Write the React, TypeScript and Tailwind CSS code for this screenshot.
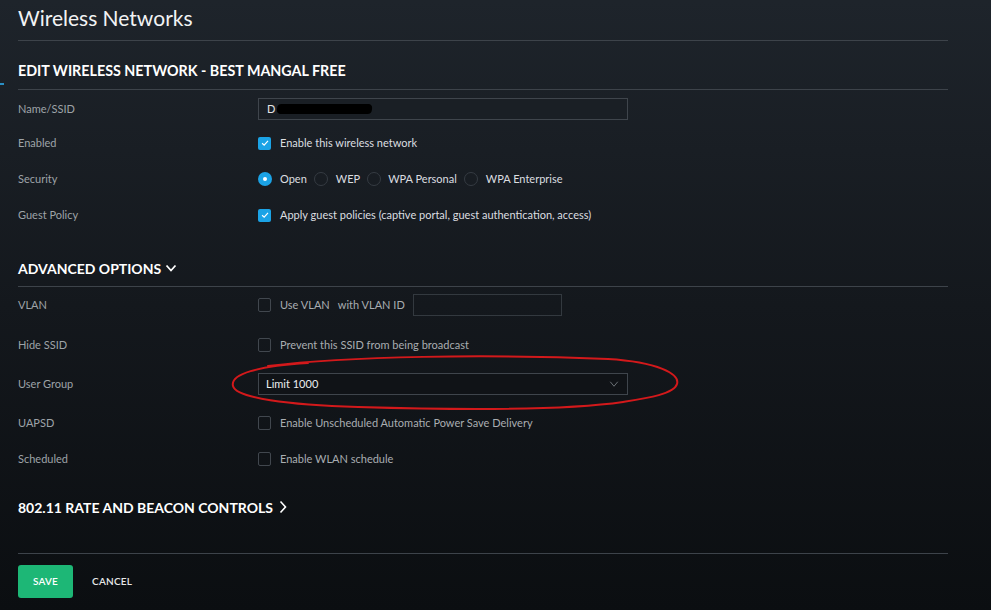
import React from 'react'

const Check = ({ checked }: { checked?: boolean }) =>
  checked ? (
    <span className="flex h-[13px] w-[13px] items-center justify-center rounded-[2px] bg-[#1ba3e6]">
      <svg viewBox="0 0 12 12" className="h-[10px] w-[10px]">
        <polyline points="2.5,6.3 5,8.6 9.6,3.4" fill="none" stroke="#fff" strokeWidth="1.4" />
      </svg>
    </span>
  ) : (
    <span className="h-[14px] w-[13px] rounded-[2px] border border-[#41474e]" />
  )

const Radio = ({ checked }: { checked?: boolean }) =>
  checked ? (
    <span className="flex h-[14px] w-[14px] items-center justify-center rounded-full bg-[#1ba3e6]">
      <span className="h-[4px] w-[4px] rounded-full bg-white" />
    </span>
  ) : (
    <span className="h-[14px] w-[14px] rounded-full border border-[#353b42]" />
  )

const Row = ({ label, h, children }: { label: string; h: string; children: React.ReactNode }) => (
  <div className={`flex items-center ${h}`}>
    <div className="w-[240px] text-[11px] text-[#9ea3a8]">{label}</div>
    <div className="flex items-center text-[11px] text-[#dcdee0]">{children}</div>
  </div>
)

export default function App() {
  return (
    <div
      className="relative h-[610px] w-[991px] overflow-hidden bg-gradient-to-b from-[#1e242b] via-[#14181d] to-[#0b0e11] pl-[18px]"
      style={{ fontFamily: 'Lato, "Open Sans", sans-serif' }}
    >
      <span className="absolute left-0 top-[83px] h-[2px] w-[4px] bg-[#2a8fc4]" />

      <div className="w-[930px]">
        <h1 className="flex h-[40px] items-center pb-[4px] text-[21px] text-[#f2f3f4]">Wireless Networks</h1>
        <div className="h-px bg-[#3d434a]" />

        <h2 className="flex h-[48px] items-center pt-[12px] text-[14.3px] font-bold text-white">
          EDIT WIRELESS NETWORK - BEST MANGAL FREE
        </h2>
        <div className="h-px bg-[#3d434a]" />

        <Row label="Name/SSID" h="h-[38px]">
          <div className="flex h-[22px] w-[370px] items-center border border-[#3f454c] bg-[#1a1f25] px-[8px]">
            <span className="text-[#e5e5e5]">D</span>
            <span className="ml-[2px] h-[10px] w-[95px] -skew-x-6 rounded-sm bg-black" />
          </div>
        </Row>
        <Row label="Enabled" h="h-[30px]">
          <Check checked />
          <span className="ml-[9px]">Enable this wireless network</span>
        </Row>
        <Row label="Security" h="h-[42px]">
          <Radio checked />
          <span className="ml-[8px] mr-[7px]">Open</span>
          <Radio />
          <span className="ml-[8px] mr-[7px]">WEP</span>
          <Radio />
          <span className="ml-[7px] mr-[7px]">WPA Personal</span>
          <Radio />
          <span className="ml-[8px]">WPA Enterprise</span>
        </Row>
        <Row label="Guest Policy" h="h-[30px]">
          <Check checked />
          <span className="ml-[9px]">Apply guest policies (captive portal, guest authentication, access)</span>
        </Row>

        <h2 className="mt-[20px] flex h-[36px] items-center gap-[4px] text-[14px] font-bold text-white">
          ADVANCED OPTIONS
          <svg viewBox="0 0 12 12" className="h-[12px] w-[12px]">
            <polyline points="1.5,3.5 6,8.5 10.5,3.5" fill="none" stroke="#fff" strokeWidth="1.8" />
          </svg>
        </h2>
        <div className="h-px bg-[#3d434a]" />

        <div className="text-[#b0b4b8]">
          <Row label="VLAN" h="h-[36px]">
            <Check />
            <span className="ml-[9px] text-[#a9adb1]">Use VLAN</span>
            <span className="ml-[8px] text-[#a9adb1]">with VLAN ID</span>
            <div className="ml-[8px] h-[22px] w-[149px] border border-[#33393f]" />
          </Row>
          <Row label="Hide SSID" h="h-[44px]">
            <Check />
            <span className="ml-[9px] text-[#a9adb1]">Prevent this SSID from being broadcast</span>
          </Row>
          <Row label="User Group" h="h-[34px]">
            <div className="flex h-[22px] w-[370px] items-center justify-between border border-[#3f454c] bg-[#101317] pl-[7px] pr-[8px]">
              <span className="text-[#eceef0]">Limit 1000</span>
              <svg viewBox="0 0 12 8" className="h-[6px] w-[10px]">
                <polyline points="1,1 6,7 11,1" fill="none" stroke="#8a9096" strokeWidth="1" />
              </svg>
            </div>
          </Row>
          <Row label="UAPSD" h="h-[44px]">
            <Check />
            <span className="ml-[9px] text-[#a9adb1]">Enable Unscheduled Automatic Power Save Delivery</span>
          </Row>
          <Row label="Scheduled" h="h-[28px]">
            <Check />
            <span className="ml-[9px] text-[#a9adb1]">Enable WLAN schedule</span>
          </Row>
        </div>

        <h2 className="mt-[22px] flex h-[24px] items-center gap-[6px] text-[14px] font-bold text-white">
          802.11 RATE AND BEACON CONTROLS
          <svg viewBox="0 0 8 14" className="h-[14px] w-[8px]">
            <polyline points="1.5,1.5 6.5,7 1.5,12.5" fill="none" stroke="#fff" strokeWidth="1.6" />
          </svg>
        </h2>

        <div className="mt-[34px] h-px bg-[#3d434a]" />

        <div className="mt-[11px] flex items-center gap-[19px]">
          <button className="h-[33px] w-[55px] rounded-[3px] bg-[#1db776] text-[10px] font-semibold tracking-wide text-white">
            SAVE
          </button>
          <button className="text-[10px] font-semibold tracking-wide text-[#e6e7e8]">CANCEL</button>
        </div>
      </div>

      <svg className="pointer-events-none absolute left-[228px] top-[354px] h-[58px] w-[456px]" viewBox="0 0 456 58">
        <path
          d="M40 12 C 120 2, 260 0, 380 5 C 430 8, 452 20, 449 30 C 446 40, 420 44, 395 48 C 340 56, 230 56, 130 53 C 60 51, 8 44, 5 32 C 2 20, 30 12, 80 9"
          fill="none"
          stroke="#d3191b"
          strokeWidth="2"
          strokeLinecap="round"
        />
      </svg>
    </div>
  )
}
